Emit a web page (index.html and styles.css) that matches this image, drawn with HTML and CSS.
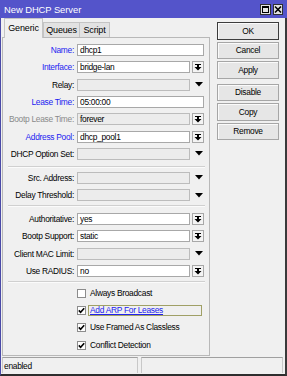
FILE: index.html
```html
<!DOCTYPE html>
<html>
<head>
<meta charset="utf-8">
<link rel="stylesheet" href="styles.css">
</head>
<body>
<div class="titlebar">
  <span class="title">New DHCP Server</span>
  <div class="tbtns">
    <span class="tbtn"><svg width="9" height="9" viewBox="0 0 9 9"><rect x="1.5" y="1.5" width="6" height="6" fill="none" stroke="#000" stroke-width="1"/><rect x="1" y="1" width="7" height="2" fill="#000"/></svg></span>
    <span class="tbtn close"><svg width="8" height="9" viewBox="0 0 8 9"><path d="M1 1.5L7 7.5M7 1.5L1 7.5" stroke="#000" stroke-width="1.6"/></svg></span>
  </div>
</div>
<div class="frame">
  <div class="main">
    <div class="left">
      <div class="tabs">
        <div class="tab active">Generic</div>
        <div class="tab q">Queues</div>
        <div class="tab s">Script</div>
      </div>
      <div class="panel">
        <div class="row"><span class="lbl blue">Name:</span><span class="fld wide">dhcp1</span></div>
        <div class="row"><span class="lbl blue">Interface:</span><span class="fld">bridge-lan</span><span class="ibtn"><svg width="10" height="10" viewBox="0 0 10 10"><path d="M2 2h6v1H2z M4 3h2v2H4z M1.5 5h7L5 8.5z" fill="#000"/></svg></span></div>
        <div class="row"><span class="lbl">Relay:</span><span class="fld dis"></span><span class="tri"><svg width="8" height="5" viewBox="0 0 8 5"><path d="M0 0h8L4 4.5z" fill="#000"/></svg></span></div>
        <div class="row"><span class="lbl blue">Lease Time:</span><span class="fld wide">05:00:00</span></div>
        <div class="row"><span class="lbl gray">Bootp Lease Time:</span><span class="fld dis">forever</span><span class="ibtn"><svg width="10" height="10" viewBox="0 0 10 10"><path d="M2 2h6v1H2z M4 3h2v2H4z M1.5 5h7L5 8.5z" fill="#000"/></svg></span></div>
        <div class="row"><span class="lbl blue">Address Pool:</span><span class="fld">dhcp_pool1</span><span class="ibtn"><svg width="10" height="10" viewBox="0 0 10 10"><path d="M2 2h6v1H2z M4 3h2v2H4z M1.5 5h7L5 8.5z" fill="#000"/></svg></span></div>
        <div class="row"><span class="lbl">DHCP Option Set:</span><span class="fld dis"></span><span class="tri"><svg width="8" height="5" viewBox="0 0 8 5"><path d="M0 0h8L4 4.5z" fill="#000"/></svg></span></div>
        <div class="sep s1"></div>
        <div class="row"><span class="lbl">Src. Address:</span><span class="fld dis"></span><span class="tri"><svg width="8" height="5" viewBox="0 0 8 5"><path d="M0 0h8L4 4.5z" fill="#000"/></svg></span></div>
        <div class="row"><span class="lbl">Delay Threshold:</span><span class="fld dis"></span><span class="tri"><svg width="8" height="5" viewBox="0 0 8 5"><path d="M0 0h8L4 4.5z" fill="#000"/></svg></span></div>
        <div class="sep s2"></div>
        <div class="row"><span class="lbl">Authoritative:</span><span class="fld">yes</span><span class="ibtn"><svg width="10" height="10" viewBox="0 0 10 10"><path d="M2 2h6v1H2z M4 3h2v2H4z M1.5 5h7L5 8.5z" fill="#000"/></svg></span></div>
        <div class="row"><span class="lbl">Bootp Support:</span><span class="fld">static</span><span class="ibtn"><svg width="10" height="10" viewBox="0 0 10 10"><path d="M2 2h6v1H2z M4 3h2v2H4z M1.5 5h7L5 8.5z" fill="#000"/></svg></span></div>
        <div class="row"><span class="lbl">Client MAC Limit:</span><span class="fld dis"></span><span class="tri"><svg width="8" height="5" viewBox="0 0 8 5"><path d="M0 0h8L4 4.5z" fill="#000"/></svg></span></div>
        <div class="row"><span class="lbl">Use RADIUS:</span><span class="fld">no</span><span class="ibtn"><svg width="10" height="10" viewBox="0 0 10 10"><path d="M2 2h6v1H2z M4 3h2v2H4z M1.5 5h7L5 8.5z" fill="#000"/></svg></span></div>
        <div class="sep s3"></div>
        <div class="crow"><span class="cb"></span><span class="clbl">Always Broadcast</span></div>
        <div class="crow"><span class="cb"><svg width="7" height="7" viewBox="0 0 7 7"><path d="M0.8 3.4L2.6 5.3L6.2 1.2" fill="none" stroke="#000" stroke-width="1.6"/></svg></span><span class="clbl focus">Add ARP For Leases</span></div>
        <div class="crow"><span class="cb"><svg width="7" height="7" viewBox="0 0 7 7"><path d="M0.8 3.4L2.6 5.3L6.2 1.2" fill="none" stroke="#000" stroke-width="1.6"/></svg></span><span class="clbl">Use Framed As Classless</span></div>
        <div class="crow"><span class="cb"><svg width="7" height="7" viewBox="0 0 7 7"><path d="M0.8 3.4L2.6 5.3L6.2 1.2" fill="none" stroke="#000" stroke-width="1.6"/></svg></span><span class="clbl">Conflict Detection</span></div>
      </div>
    </div>
    <div class="right">
      <div class="btn def">OK</div>
      <div class="btn">Cancel</div>
      <div class="btn">Apply</div>
      <div class="btn gap">Disable</div>
      <div class="btn">Copy</div>
      <div class="btn">Remove</div>
    </div>
  </div>
  <div class="status">
    <div class="cell c1">enabled</div>
    <div class="cell c2"></div>
  </div>
</div>
</body>
</html>
```

FILE: styles.css
```css
html, body {
  margin: 0;
  padding: 0;
}
body {
  width: 287px;
  height: 376px;
  overflow: hidden;
  background: #f0f0f0;
  font-family: "Liberation Sans", Arial, sans-serif;
  font-size: 8.4px;
  letter-spacing: -0.28px;
  color: #000;
}
.titlebar {
  height: 18px;
  background: #5454ca;
  display: flex;
  align-items: center;
  justify-content: space-between;
  padding-left: 4px;
  box-sizing: border-box;
}
.title {
  color: #fff;
  font-size: 9.4px;
  letter-spacing: -0.05px;
}
.tbtns {
  display: flex;
  gap: 2px;
  margin-right: 4px;
}
.tbtn {
  width: 11px;
  height: 11px;
  box-sizing: border-box;
  background: #e4e4e4;
  border: 1px solid #303030;
  display: flex;
  align-items: center;
  justify-content: center;
}
.tbtn.close {
  width: 10px;
}
.frame {
  height: 358px;
  box-sizing: border-box;
  border-left: 1px solid #4a4aa8;
  border-right: 2px solid #3a3a3a;
  border-bottom: 2px solid #2e2e2e;
  display: flex;
  flex-direction: column;
}
.main {
  height: 339px;
  display: flex;
  padding-left: 1px;
}
.left {
  width: 208px;
  display: flex;
  flex-direction: column;
}
.tabs {
  height: 19px;
  display: flex;
  align-items: flex-end;
  padding-left: 2px;
  position: relative;
  z-index: 1;
}
.tab {
  height: 15px;
  box-sizing: border-box;
  border: 1px solid #c4c4c4;
  border-bottom: none;
  background: #e2e2e2;
  display: flex;
  align-items: center;
  justify-content: center;
  font-size: 9px;
  letter-spacing: -0.15px;
}
.tab.active {
  width: 39px;
  height: 20px;
  margin-bottom: -1px;
  background: #f0f0f0;
  padding-bottom: 2px;
}
.tab.q {
  width: 37px;
}
.tab.s {
  width: 30px;
  border-left: none;
}
.panel {
  height: 319px;
  box-sizing: border-box;
  border: 1px solid #b8b8b8;
  padding-top: 3.33px;
}
.row {
  height: 17.33px;
  display: flex;
  align-items: center;
}
.lbl {
  width: 71px;
  margin-right: 3px;
  text-align: right;
  white-space: nowrap;
}
.lbl.blue {
  color: #1c1cf0;
}
.lbl.gray {
  color: #8a8a8a;
}
.fld {
  width: 113px;
  height: 12px;
  box-sizing: border-box;
  border: 1px solid #a8a8a8;
  background: #fff;
  padding-left: 2px;
  line-height: 10px;
  white-space: nowrap;
}
.fld.wide {
  width: 127px;
}
.fld.dis {
  background: #ececec;
  border-color: #bcbcbc;
}
.ibtn {
  width: 12px;
  height: 12px;
  margin-left: 2px;
  box-sizing: border-box;
  border: 1px solid #a8a8a8;
  background: #f4f4f4;
  display: flex;
  align-items: center;
  justify-content: center;
}
.tri {
  width: 8px;
  height: 5px;
  margin-left: 5px;
  display: flex;
}
.sep {
  margin-left: 5px;
  margin-right: 4px;
  border-top: 1px solid #d0d0d0;
  border-bottom: 1px solid #fbfbfb;
}
.sep.s1 {
  margin-top: 3.3px;
  margin-bottom: 1.4px;
}
.sep.s2 {
  margin-top: 1.5px;
  margin-bottom: 2.8px;
}
.sep.s3 {
  margin-top: 1.8px;
  margin-bottom: 1px;
}
.crow {
  height: 17.33px;
  display: flex;
  align-items: center;
  padding-left: 74px;
}
.cb {
  width: 9px;
  height: 9px;
  box-sizing: border-box;
  border: 1px solid #8c8c8c;
  background: #fff;
  display: flex;
  align-items: center;
  justify-content: center;
}
.clbl {
  margin-left: 2px;
  padding-left: 1px;
  height: 11px;
  line-height: 9px;
  box-sizing: border-box;
  border: 1px solid transparent;
  white-space: nowrap;
}
.clbl.focus {
  width: 114px;
  border-color: #a0a066;
  color: #2222ee;
  text-decoration: underline;
}
.right {
  width: 62px;
  margin-left: 7px;
  padding-top: 4px;
  display: flex;
  flex-direction: column;
  gap: 2px;
}
.btn {
  height: 17.5px;
  box-sizing: border-box;
  border: 1px solid #a6a6a6;
  background: #e6e6e6;
  box-shadow: inset 1px 1px 0 #fafafa;
  display: flex;
  align-items: center;
  justify-content: center;
}
.btn.def {
  border-color: #3c3c3c;
}
.btn.gap {
  margin-top: 3px;
}
.status {
  height: 16px;
  display: flex;
  padding-left: 1px;
  gap: 3px;
}
.cell {
  height: 16px;
  box-sizing: border-box;
  border-top: 1px solid #a0a0a0;
  border-left: 1px solid #c8c8c8;
  border-right: 1px solid #c8c8c8;
  padding-left: 1px;
  display: flex;
  align-items: center;
}
.cell.c1 {
  width: 136px;
}
.cell.c2 {
  width: 142px;
}
```
